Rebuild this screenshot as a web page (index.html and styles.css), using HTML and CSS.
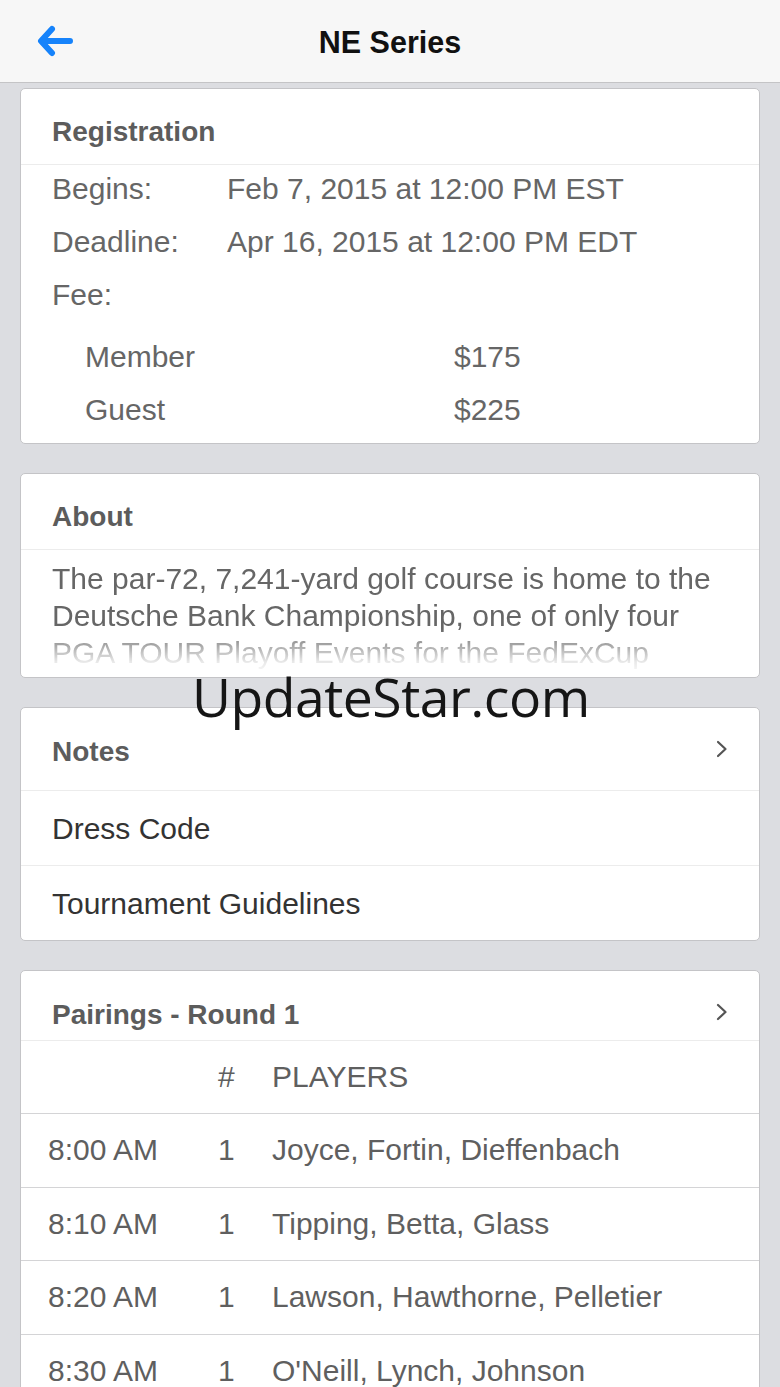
FILE: index.html
```html
<!DOCTYPE html>
<html>
<head>
<meta charset="utf-8">
<link rel="stylesheet" href="styles.css">
</head>
<body>
<header class="navbar">
  <span class="back">
    <svg width="38" height="32" viewBox="0 0 38 32"><path d="M34 16 H6 M16 4 L5 16 L16 28" fill="none" stroke="#1683fb" stroke-width="6" stroke-linecap="round" stroke-linejoin="round"/></svg>
  </span>
  <h1 class="title">NE Series</h1>
</header>
<main class="content">
  <section class="card">
    <div class="card-head head-reg">Registration</div>
    <div class="reg-rows">
      <div class="reg-row"><span class="reg-label">Begins:</span><span>Feb 7, 2015 at 12:00 PM EST</span></div>
      <div class="reg-row"><span class="reg-label">Deadline:</span><span>Apr 16, 2015 at 12:00 PM EDT</span></div>
      <div class="reg-row"><span class="reg-label">Fee:</span></div>
      <div class="fee-list">
        <div class="fee-row"><span class="fee-label">Member</span><span>$175</span></div>
        <div class="fee-row"><span class="fee-label">Guest</span><span>$225</span></div>
      </div>
    </div>
  </section>

  <section class="card">
    <div class="card-head head-reg">About</div>
    <div class="about">
      <p class="about-text">The par-72, 7,241-yard golf course is home to the Deutsche Bank Championship, one of only four PGA TOUR Playoff Events for the FedExCup competition, and has hosted the U.S. Open and the Ryder Cup.</p>
    </div>
  </section>

  <section class="card">
    <div class="card-head head-notes"><span>Notes</span><span class="chev"><svg width="12" height="18" viewBox="0 0 12 18"><path d="M2 2 L9.5 9 L2 16" fill="none" stroke="#555" stroke-width="2.2" stroke-linecap="round" stroke-linejoin="round"/></svg></span></div>
    <div class="note-row">Dress Code</div>
    <div class="note-row">Tournament Guidelines</div>
  </section>

  <section class="card">
    <div class="card-head head-pair"><span>Pairings - Round 1</span><span class="chev"><svg width="12" height="18" viewBox="0 0 12 18"><path d="M2 2 L9.5 9 L2 16" fill="none" stroke="#555" stroke-width="2.2" stroke-linecap="round" stroke-linejoin="round"/></svg></span></div>
    <div class="pair-row pair-head"><span class="c-time"></span><span class="c-num">#</span><span>PLAYERS</span></div>
    <div class="pair-row"><span class="c-time">8:00 AM</span><span class="c-num">1</span><span>Joyce, Fortin, Dieffenbach</span></div>
    <div class="pair-row"><span class="c-time">8:10 AM</span><span class="c-num">1</span><span>Tipping, Betta, Glass</span></div>
    <div class="pair-row"><span class="c-time">8:20 AM</span><span class="c-num">1</span><span>Lawson, Hawthorne, Pelletier</span></div>
    <div class="pair-row"><span class="c-time">8:30 AM</span><span class="c-num">1</span><span>O'Neill, Lynch, Johnson</span></div>
  </section>
</main>
<div class="watermark">UpdateStar.com</div>
</body>
</html>
```
FILE: styles.css
```css
* { box-sizing: border-box; }
html, body { margin: 0; padding: 0; }
body {
  background: #dcdde1;
  font-family: "Liberation Sans", Arial, sans-serif;
  color: #666;
  width: 780px;
  height: 1387px;
  overflow: hidden;
  position: relative;
}
.navbar {
  height: 83px;
  background: #f7f7f7;
  border-bottom: 1px solid #c4c4c6;
  display: flex;
  align-items: center;
  justify-content: center;
  position: relative;
}
.back {
  position: absolute;
  left: 36px;
  top: 25px;
  display: flex;
}
.title {
  margin: 2px 0 0;
  font-size: 30.5px;
  font-weight: bold;
  color: #111;
  line-height: 1;
}
.content {
  padding: 5px 20px 0;
  display: flex;
  flex-direction: column;
  gap: 29px;
}
.card {
  background: #fff;
  border: 1px solid #c4c4c7;
  border-radius: 5px;
  overflow: hidden;
}
.card-head {
  font-size: 28px;
  font-weight: bold;
  color: #5c5c5c;
  line-height: 28px;
  padding: 29px 31px 19px;
  border-bottom: 1px solid #ececec;
  display: flex;
  justify-content: space-between;
  align-items: center;
}
.head-reg { padding-bottom: 18px; }
.head-notes { padding-top: 30px; padding-bottom: 24px; }
.head-pair { padding-top: 30px; padding-bottom: 11px; }
.chev { display: flex; margin-top: -6px; }
.reg-rows {
  margin-top: -3px;
  padding: 0 0 7px;
  font-size: 30px;
}
.reg-row {
  display: flex;
  height: 53px;
  line-height: 53px;
  padding-left: 31px;
}
.reg-label { width: 175px; }
.fee-list { padding-top: 9px; }
.fee-row {
  display: flex;
  height: 53px;
  line-height: 53px;
  padding-left: 64px;
}
.fee-label { width: 369px; }
.about {
  height: 127px;
  overflow: hidden;
  padding: 10px 31px 0;
  -webkit-mask-image: linear-gradient(to bottom, #000 62%, rgba(0,0,0,0.15) 88%, rgba(0,0,0,0) 100%);
  mask-image: linear-gradient(to bottom, #000 62%, rgba(0,0,0,0.15) 88%, rgba(0,0,0,0) 100%);
}
.about-text {
  margin: 0;
  font-size: 30px;
  line-height: 37px;
  color: #666;
}
.note-row {
  height: 75px;
  line-height: 76px;
  padding-left: 31px;
  font-size: 30px;
  color: #333;
  border-bottom: 1px solid #ececec;
}
.note-row:last-child { border-bottom: 0; height: 74px; }
.pair-row {
  display: flex;
  height: 73.5px;
  align-items: center;
  font-size: 30px;
  color: #5f5f5f;
  border-bottom: 1px solid #d4d4d6;
  padding-left: 27px;
}
.pair-head { height: 73px; }
.c-time { width: 170px; }
.c-num { width: 54px; }
.watermark {
  position: absolute;
  left: 192px;
  top: 662px;
  font-family: "Open Sans", "Noto Sans", sans-serif;
  font-size: 53.5px;
  line-height: 70px;
  color: #151515;
  letter-spacing: -0.5px;
}
```
